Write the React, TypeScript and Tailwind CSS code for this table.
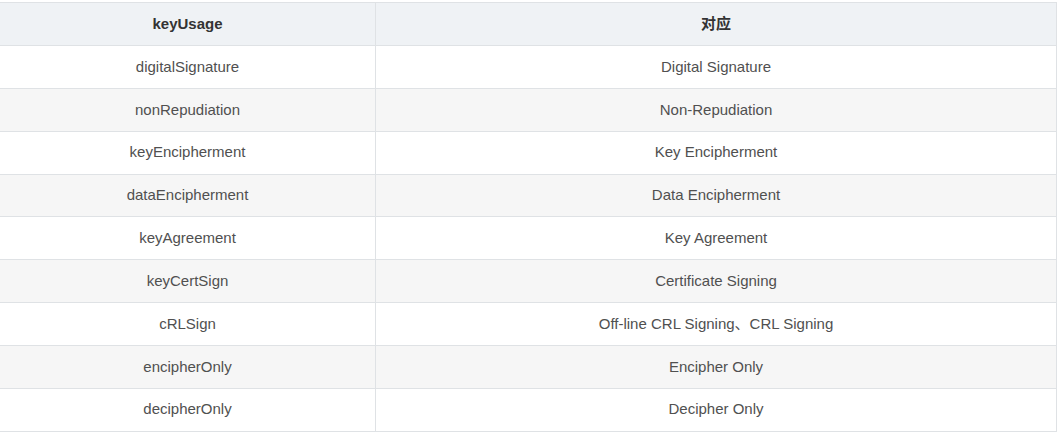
import React from "react";

const rows: [string, string][] = [
  ["digitalSignature", "Digital Signature"],
  ["nonRepudiation", "Non-Repudiation"],
  ["keyEncipherment", "Key Encipherment"],
  ["dataEncipherment", "Data Encipherment"],
  ["keyAgreement", "Key Agreement"],
  ["keyCertSign", "Certificate Signing"],
  ["cRLSign", "Off-line CRL Signing、CRL Signing"],
  ["encipherOnly", "Encipher Only"],
  ["decipherOnly", "Decipher Only"],
];

export default function App() {
  return (
    <div
      className="w-[1059px] h-[434px] bg-white overflow-hidden pt-[2px]"
      style={{ fontFamily: '"Liberation Sans", Arial, "Noto Sans CJK SC", sans-serif' }}
    >
      <table className="-ml-px w-[1058px] border-collapse text-[15px] table-fixed">
        <colgroup>
          <col className="w-[376px]" />
          <col />
        </colgroup>
        <thead>
          <tr className="h-[43px] bg-[#eff2f5]">
            <th className="border border-[#dfe2e5] font-bold text-[#333] text-center align-middle">keyUsage</th>
            <th className="border border-[#dfe2e5] font-bold text-[#333] text-center align-middle">对应</th>
          </tr>
        </thead>
        <tbody>
          {rows.map(([a, b], i) => (
            <tr key={a} className={"h-[42.85px] " + (i % 2 === 1 ? "bg-[#f6f6f6]" : "bg-white")}>
              <td className="border border-[#dfe2e5] text-[#505050] text-center align-middle">{a}</td>
              <td className="border border-[#dfe2e5] text-[#505050] text-center align-middle">{b}</td>
            </tr>
          ))}
        </tbody>
      </table>
    </div>
  );
}
